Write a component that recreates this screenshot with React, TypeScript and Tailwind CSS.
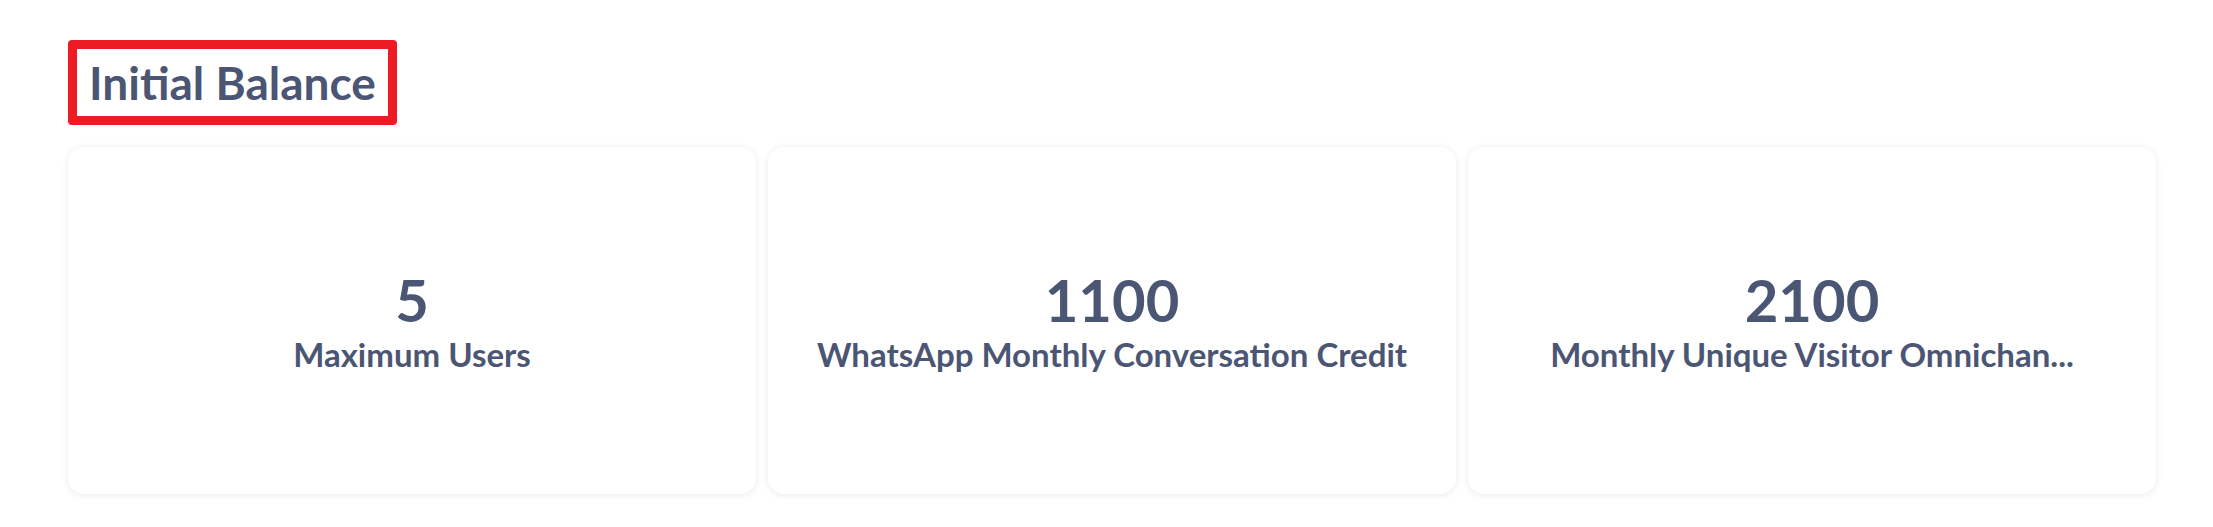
export default function App() {
  const cards = [
    { value: "5", label: "Maximum Users" },
    { value: "1100", label: "WhatsApp Monthly Conversation Credit" },
    { value: "2100", label: "Monthly Unique Visitor Omnichan..." },
  ];
  return (
    <div
      className="min-h-[527px] w-full bg-white pl-[68px] pr-[57px] pt-[40px] text-[#4b5574]"
      style={{ fontFamily: "Lato, 'Noto Sans', sans-serif" }}
    >
      <div className="flex">
        <h2 className="rounded-[4px] border-[9px] border-[#ed1c24] px-[12px] py-[3px] text-[46px] font-bold leading-[61px]">
          Initial Balance
        </h2>
      </div>
      <div className="mt-[22px] grid grid-cols-3 gap-[12px]">
        {cards.map((c) => (
          <div
            key={c.value}
            className="flex h-[347px] flex-col items-center justify-center rounded-[16px] bg-white px-[60px] shadow-[0_1px_7px_rgba(0,0,0,0.09)]"
          >
            <div className="text-[58px] font-bold leading-[64px]">{c.value}</div>
            <div className="mt-[2px] whitespace-nowrap text-[33px] font-bold leading-[40px]">
              {c.label}
            </div>
          </div>
        ))}
      </div>
    </div>
  );
}
